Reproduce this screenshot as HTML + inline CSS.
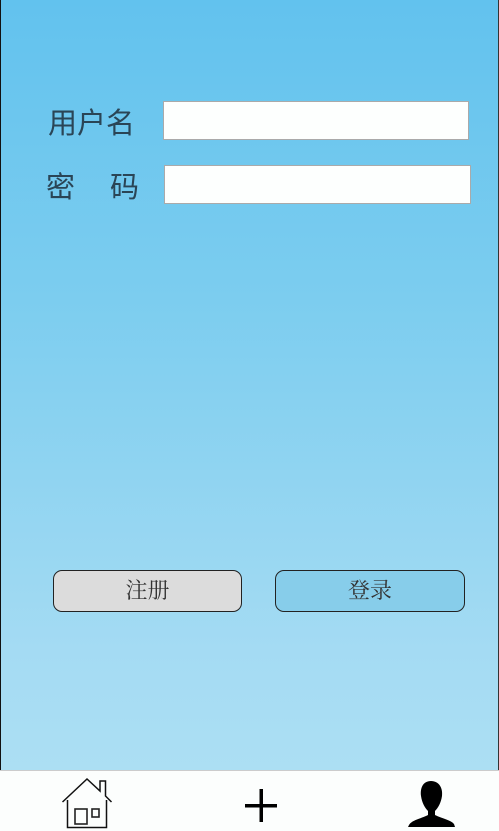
<!DOCTYPE html>
<html><head><meta charset="utf-8"><style>
html,body{margin:0;padding:0}
body{width:499px;height:831px;position:relative;overflow:hidden;font-family:"Liberation Sans","Noto Sans CJK SC",sans-serif;
background:linear-gradient(#62c2ee 0px,#7ccdef 300px,#a4dbf3 650px,#acdff3 770px);}
.bl{position:absolute;left:0;top:0;width:1px;height:771px;background:#111}
.br{position:absolute;right:0;top:0;width:1px;height:771px;background:#333}
.lab{position:absolute;font-size:29px;color:#2a4556;}
.inp{position:absolute;background:#fdfffe;border:1px solid #aaa;box-sizing:border-box}
.btn{position:absolute;height:42px;border:1px solid #222;border-radius:9px;box-sizing:border-box;text-align:center;line-height:40px;font-size:22px;color:#333;font-family:"Liberation Serif","Noto Serif CJK SC",serif}
.bar{position:absolute;left:0;top:770px;width:499px;height:61px;background:#fcfefd;border-top:1px solid #ccc;box-sizing:border-box}
</style></head><body>
<div class="bl"></div><div class="br"></div>
<div class="lab" style="left:48px;top:100px">用户名</div>
<div class="lab" style="left:46px;top:164px">密</div>
<div class="lab" style="left:110px;top:164px">码</div>
<div class="inp" style="left:163px;top:101px;width:306px;height:39px"></div>
<div class="inp" style="left:164px;top:165px;width:307px;height:39px"></div>
<div class="btn" style="left:53px;top:570px;width:189px;background:#dcdcdc">注册</div>
<div class="btn" style="left:275px;top:570px;width:190px;background:#87cdea">登录</div>
<div class="bar"></div>
<svg style="position:absolute;left:0;top:771px" width="499" height="60">
<path d="M67.5 29 V56.5 H106.5 V29 M62.5 31 L87 8 L100 20 V10 H105.5 V25 L111.5 31" fill="none" stroke="#111" stroke-width="1.5"/>
<rect x="75" y="38" width="12" height="15" fill="none" stroke="#222" stroke-width="1.6"/>
<rect x="92" y="38" width="7" height="8" fill="none" stroke="#222" stroke-width="1.6"/>
<rect x="245" y="33" width="32" height="3.5" fill="#000"/>
<rect x="259.5" y="18" width="3.5" height="33" fill="#000"/>
<path d="M431 10 C423 10 420 17 421 25 C422 32 425 37 428 40 L428 44 C420 48 412 49 409 54 L408 56 L455 56 L454 53 C451 49 443 48 435 44 L435 40 C438 37 441 32 442 25 C443 17 439 10 431 10 Z" fill="#000"/>
</svg>
</body></html>
